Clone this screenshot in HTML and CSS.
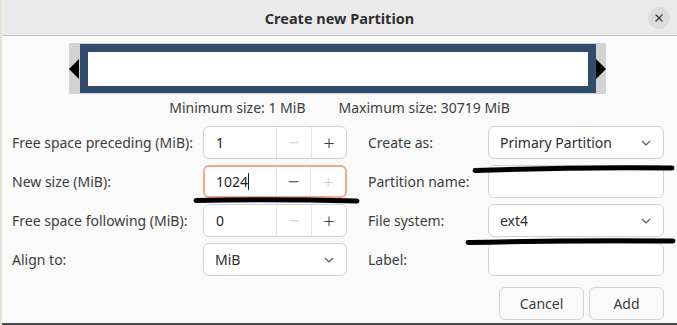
FILE: index.html
```html
<!DOCTYPE html>
<html lang="en">
<head>
    <meta charset="UTF-8">
    <meta name="viewport" content="width=device-width, initial-scale=1.0">
    <title>Create new Partition</title>
    <link rel="stylesheet" href="styles.css">
</head>
<body>
    <div class="window">
        <div class="headerbar">
            <div class="title">Create new Partition</div>
            <button class="close-btn" aria-label="Close">
                <svg width="10" height="10" viewBox="0 0 10 10"><path d="M1.5 1.5 L8.5 8.5 M8.5 1.5 L1.5 8.5" stroke="#3d3d3d" stroke-width="1.3" fill="none"/></svg>
            </button>
        </div>

        <div class="content">
            <div class="resizer">
                <span class="arrow left"></span>
                <div class="frame"><div class="inner"></div></div>
                <span class="arrow right"></span>
            </div>

            <div class="limits">
                <span>Minimum size: 1 MiB</span>
                <span>Maximum size: 30719 MiB</span>
            </div>

            <div class="form">
                <div class="label">Free space preceding (MiB):</div>
                <div class="spin">
                    <div class="spin-text">1</div>
                    <div class="spin-btn disabled">&minus;</div>
                    <div class="spin-btn">+</div>
                </div>
                <div class="label right">Create as:</div>
                <div class="combo"><span>Primary Partition</span><svg class="chev" width="10" height="6" viewBox="0 0 10 6"><path d="M1 1 L5 5 L9 1" stroke="#555" stroke-width="1.1" fill="none"/></svg></div>

                <div class="label">New size (MiB):</div>
                <div class="spin focused">
                    <div class="spin-text">1024<span class="caret"></span></div>
                    <div class="spin-btn">&minus;</div>
                    <div class="spin-btn disabled">+</div>
                </div>
                <div class="label right">Partition name:</div>
                <div class="entry"></div>

                <div class="label">Free space following (MiB):</div>
                <div class="spin">
                    <div class="spin-text">0</div>
                    <div class="spin-btn disabled">&minus;</div>
                    <div class="spin-btn">+</div>
                </div>
                <div class="label right">File system:</div>
                <div class="combo"><span>ext4</span><svg class="chev" width="10" height="6" viewBox="0 0 10 6"><path d="M1 1 L5 5 L9 1" stroke="#555" stroke-width="1.1" fill="none"/></svg></div>

                <div class="label">Align to:</div>
                <div class="combo"><span>MiB</span><svg class="chev" width="10" height="6" viewBox="0 0 10 6"><path d="M1 1 L5 5 L9 1" stroke="#555" stroke-width="1.1" fill="none"/></svg></div>
                <div class="label right">Label:</div>
                <div class="entry"></div>
            </div>

            <div class="actions">
                <button class="btn cancel">Cancel</button>
                <button class="btn add">Add</button>
            </div>
        </div>

        <!-- redaction marks drawn over the screenshot -->
        <svg class="marks" width="675" height="325" viewBox="0 0 675 325">
            <path d="M194 200.5 Q270 199 355 201" stroke="#000" stroke-width="5" stroke-linecap="round" fill="none"/>
            <path d="M473 170.5 Q570 167 670 168" stroke="#000" stroke-width="5" stroke-linecap="round" fill="none"/>
            <path d="M466 242.5 Q570 240 671 241" stroke="#000" stroke-width="5" stroke-linecap="round" fill="none"/>
        </svg>
    </div>
</body>
</html>
```

FILE: styles.css
```css
body {
    margin: 0;
    padding-left: 2px;
    background-color: #e6e4d8;
    font-family: 'Noto Sans', 'Liberation Sans', sans-serif;
    color: #3d3d3d;
}

.window {
    position: relative;
    width: 675px;
    height: 323px;
    background-color: #fafafa;
    border-bottom: 2px solid #4d4d4d;
    overflow: hidden;
}

.headerbar {
    position: relative;
    height: 35px;
    background-color: #ebebeb;
    border-bottom: 1px solid #c4c4c4;
    display: flex;
    align-items: center;
    justify-content: center;
}

.title {
    font-weight: bold;
    font-size: 14.5px;
    color: #303030;
}

.close-btn {
    position: absolute;
    right: 7px;
    top: 7px;
    width: 22px;
    height: 22px;
    border: none;
    border-radius: 50%;
    background-color: #dcdcdc;
    padding: 0;
    display: flex;
    align-items: center;
    justify-content: center;
}

.content {
    padding-top: 7px;
}

/* partition resizer */
.resizer {
    margin-left: 67px;
    width: 537px;
    height: 51px;
    background-color: #d3d3d3;
    display: flex;
    align-items: center;
}

.arrow {
    width: 0;
    height: 0;
    border-top: 10px solid transparent;
    border-bottom: 10px solid transparent;
}

.arrow.left {
    margin-right: 1px;
    border-right: 10px solid #000;
}

.arrow.right {
    border-left: 10px solid #000;
}

.frame {
    flex: 1;
    height: 49px;
    box-sizing: border-box;
    background-color: #314d6b;
    padding: 8px 8px 7px 8px;
}

.inner {
    height: 100%;
    background-color: #fff;
}

.limits {
    display: flex;
    justify-content: center;
    gap: 33px;
    font-size: 14px;
    margin-top: 2px;
    height: 30px;
    line-height: 24px;
}

/* form grid */
.form {
    display: grid;
    grid-template-columns: 191px 144px 141px 176px;
    grid-auto-rows: 33px;
    row-gap: 6px;
    padding-left: 10px;
    align-items: center;
    font-size: 14px;
}

.label.right {
    margin-left: 21px;
}

.spin,
.combo,
.entry {
    height: 33px;
    box-sizing: border-box;
    border: 1px solid #d2d2d2;
    border-radius: 6px;
    background-color: #fff;
}

.spin {
    display: flex;
}

.spin.focused {
    border: 2px solid #f3a88c;
}

.spin-text {
    width: 74px;
    padding-left: 12px;
    box-sizing: border-box;
    display: flex;
    align-items: center;
    color: #1e1e1e;
}

.spin.focused .spin-text {
    padding-left: 11px;
    width: 73px;
}

.caret {
    display: inline-block;
    width: 1px;
    height: 17px;
    background-color: #1e1e1e;
}

.spin-btn {
    width: 35px;
    border-left: 1px solid #e6e6e6;
    display: flex;
    align-items: center;
    justify-content: center;
    font-size: 20px;
    font-weight: 300;
    color: #3d3d3d;
}

.spin-btn.disabled {
    color: #cfcfcf;
}

.combo {
    display: flex;
    align-items: center;
    justify-content: space-between;
    padding: 0 11px;
    color: #2e2e2e;
}

.combo .chev {
    margin-right: 1px;
}

/* dialog buttons */
.actions {
    display: flex;
    justify-content: flex-end;
    gap: 5px;
    padding-right: 13px;
    margin-top: 11px;
}

.btn {
    height: 33px;
    border: 1px solid #d2d2d2;
    border-radius: 6px;
    background-color: #fafafa;
    font-family: inherit;
    font-size: 14px;
    color: #3d3d3d;
}

.btn.cancel {
    width: 85px;
}

.btn.add {
    width: 75px;
}

.marks {
    position: absolute;
    left: 0;
    top: 0;
    pointer-events: none;
}
```
